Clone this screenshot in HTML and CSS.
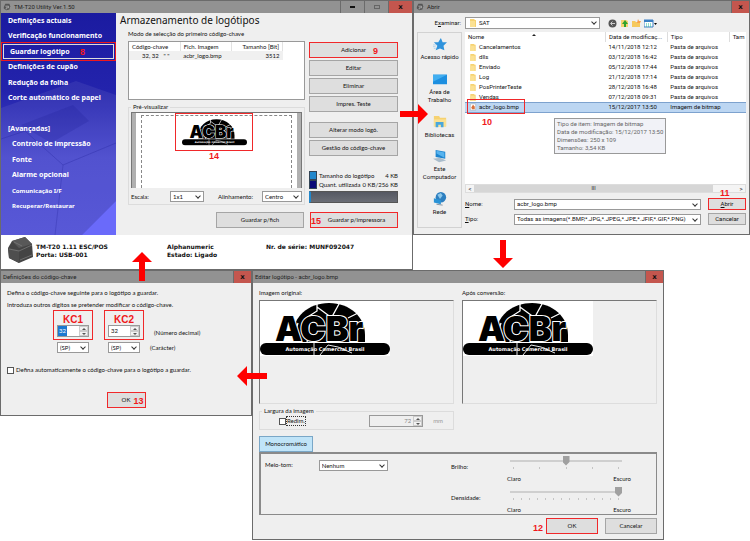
FILE: index.html
```html
<!DOCTYPE html>
<html lang="pt">
<head>
    <meta charset="UTF-8">
    <meta name="viewport" content="width=device-width, initial-scale=1.0">
    <title>TM-T20 Utility - Armazenamento de logótipos</title>
    <link rel="stylesheet" href="styles.css">
</head>
<body>
    <svg class="defs" width="0" height="0" aria-hidden="true">
        <symbol id="ball" viewBox="0 0 130 55">
            <path d="M33 34 C33 16 48 2 69 2 C90 2 105 16 105 34 L105 42 L33 42 Z"/>
            <path d="M57 1 L57 10 L46 17 M57 6 L72 17 M79 3 L73 14 L73 20 M88 17 L98 12 M38 22 L34 34 M50 18 L47 42 M92 20 L96 42" fill="none" stroke="#fff" stroke-width="1.3"/>
            <rect x="0" y="41" width="130" height="2" fill="#fff"/>
            <rect x="0" y="42" width="130" height="12" rx="6"/>
            <path d="M54 42 L54 54 M60 54 L68 44 L78 46 L92 52" fill="none" stroke="#fff" stroke-width="0.9"/>
        </symbol>
        <symbol id="folder" viewBox="0 0 8 9">
            <path d="M1 1h4l1 1h1v7H1z" fill="#f6d271"/>
            <path d="M1 3h5v6H1z" fill="#fbe193"/>
        </symbol>
        <symbol id="appicon" viewBox="0 0 10 10">
            <path d="M1 5 L3 1 L8 1 L9 4 L8 8 L4 9 L1 7z" fill="#555"/>
            <path d="M3 4h4v2H4v2" fill="none" stroke="#bbb"/>
        </symbol>
    </svg>

    <div class="board">
        <div class="row top">
            <!-- main window -->
            <section class="window utility">
                <header class="titlebar">
                    <svg class="app"><use href="#appicon"/></svg>
                    <span>TM-T20 Utility Ver.1.50</span>
                    <div class="winbtns">
                        <button aria-label="Minimizar"><i class="min"></i></button>
                        <button aria-label="Maximizar"><i class="max"></i></button>
                        <button class="close" aria-label="Fechar">x</button>
                    </div>
                </header>
                <div class="utility-body">
                    <nav class="menu">
                        <svg class="menu-bg" viewBox="0 0 115 222" preserveAspectRatio="none" aria-hidden="true">
                            <path d="M0 95 L75 68 L115 82 L115 188 L81 222 L0 222z" fill="#fff" opacity=".07"/>
                            <path d="M0 126 L24 118 L62 152 L115 130" fill="none" stroke="#2828a0" opacity=".35"/>
                            <path d="M20 112 L72 92 L88 108 L50 130z" fill="#1a1a90" opacity=".2"/>
                            <path d="M62 152 L54 222" stroke="#2828a0" opacity=".3"/>
                            <path d="M115 188 L81 222 L115 222z" fill="#6a6afa"/>
                        </svg>
                        <ul>
                            <li><a href="#">Definições actuais</a></li>
                            <li><a href="#">Verificação funcionamento</a></li>
                            <li class="active"><a href="#">Guardar logótipo</a><b class="num n8">8</b></li>
                            <li><a href="#">Definições de cupão</a></li>
                            <li><a href="#">Redução da folha</a></li>
                            <li><a href="#">Corte automático de papel</a></li>
                            <li></li>
                            <li>[Avançadas]</li>
                            <li class="sub"><a href="#">Controlo de impressão</a></li>
                            <li class="sub"><a href="#">Fonte</a></li>
                            <li class="sub"><a href="#">Alarme opcional</a></li>
                            <li class="sub small"><a href="#">Comunicação I/F</a></li>
                            <li class="sub small"><a href="#">Recuperar/Restaurar</a></li>
                        </ul>
                    </nav>
                    <main class="storage">
                        <h1>Armazenamento de logótipos</h1>
                        <div class="storage-grid">
                            <div class="left">
                                <p>Modo de selecção do primeiro código-chave</p>
                                <div class="keylist">
                                    <table>
                                        <thead>
                                            <tr><th>Código-chave</th><th>Fich. Imagem</th><th class="right">Tamanho [Bit]</th></tr>
                                        </thead>
                                        <tbody>
                                            <tr><td class="indent">32, 32 &nbsp; " "</td><td>acbr_logo.bmp</td><td class="right">3512</td></tr>
                                        </tbody>
                                    </table>
                                </div>
                                <fieldset class="preview-group">
                                    <legend>Pré-visualizar</legend>
                                    <div class="preview">
                                        <div class="paper">
                                            <div class="marked logo-mark">
                                                <svg class="logo" viewBox="0 0 130 55">
                                                    <use href="#ball"/>
                                                    <text class="acbr-name" x="15" y="40">ACBr</text>
                                                    <text class="acbr-sub" x="65" y="50">Automação Comercial Brasil</text>
                                                </svg>
                                                <b class="num n14">14</b>
                                            </div>
                                        </div>
                                    </div>
                                    <div class="options">
                                        <label for="scale">Escala:</label>
                                        <span class="select scale"><select id="scale"><option>1x1</option></select></span>
                                        <label for="align">Alinhamento:</label>
                                        <span class="select align"><select id="align"><option>Centro</option></select></span>
                                    </div>
                                </fieldset>
                            </div>
                            <div class="actions">
                                <button class="btn marked">Adicionar<b class="num n9">9</b></button>
                                <button class="btn">Editar</button>
                                <button class="btn">Eliminar</button>
                                <button class="btn">Impres. Teste</button>
                                <button class="btn spaced">Alterar modo logó.</button>
                                <button class="btn">Gestão do código-chave</button>
                                <dl class="memory">
                                    <div><dt>Tamanho do logótipo</dt><dd>4 KB</dd></div>
                                    <div class="used"><dt>Quant. utilizada</dt><dd>0 KB/256 KB</dd></div>
                                </dl>
                                <div class="membar"></div>
                            </div>
                        </div>
                        <div class="save">
                            <button class="btn">Guardar p/fich</button>
                            <button class="btn marked">Guardar p/impressora<b class="num n15">15</b></button>
                        </div>
                    </main>
                </div>
                <footer class="status">
                    <svg class="printer" viewBox="0 0 25 27">
                        <path d="M0 11 L4 4 L17 0 L24 7 L25 20 L11 26 L1 21z" fill="#444"/>
                        <path d="M4 4 L17 0 L24 7 L11 11z" fill="#585858"/>
                        <path d="M0 11 L11 13 L11 26 L1 21z" fill="#4e4e4e"/>
                        <path d="M6 5 L14 9 M1 12 L11 14 L24 8 M12 23 L24 18" fill="none" stroke="#777" stroke-width=".8"/>
                    </svg>
                    <p class="model">TM-T20 1.11 ESC/POS<br>Porta: USB-001</p>
                    <p class="state">Alphanumeric<br>Estado: Ligado</p>
                    <p>Nr. de série: MUNF092047</p>
                </footer>
            </section>

            <!-- open file dialog -->
            <section class="window open">
                <header class="titlebar">
                    <svg class="app"><use href="#appicon"/></svg>
                    <span>Abrir</span>
                    <div class="winbtns"><button class="close" aria-label="Fechar">x</button></div>
                </header>
                <div class="lookin">
                    <label for="dir">E<u>x</u>aminar:</label>
                    <span class="select dir"><svg><use href="#folder"/></svg><select id="dir"><option>SAT</option></select></span>
                    <div class="tools">
                        <button aria-label="Voltar"><svg viewBox="0 0 9 9"><circle cx="4.500" cy="4.500" r="4" fill="#555"/><path d="M7 4.500H3M4.500 2.500l-2 2 2 2" fill="none" stroke="#ccc"/></svg></button>
                        <button aria-label="Subir"><svg viewBox="0 0 9 9"><path d="M1 1h5l2 1v6H1z" fill="#f6d271"/><path d="M4 8V5H2l3-4 3 4H6v3z" fill="#2ea32e"/></svg></button>
                        <button aria-label="Nova pasta"><svg viewBox="0 0 9 9"><path d="M0 2h3l1 1h4v5H0z" fill="#f6c95c"/><path d="M6 0l1 2 2 0-1 2H5z" fill="#f7a04b"/></svg></button>
                        <button class="views" aria-label="Ver"><svg viewBox="0 0 13 9"><path d="M0 1h9v7H0z" fill="#fff" stroke="#3a7fc4"/><path d="M0 1h9v2H0z" fill="#3a7fc4"/><path d="M2 5h1M4 5h1M6 5h1M2 7h1M4 7h1M6 7h1" stroke="#2b9"/><path d="M10 4h3l-1.500 2z"/></svg></button>
                    </div>
                </div>
                <div class="browser">
                    <nav class="places">
                        <a href="#"><svg viewBox="0 0 16 16"><path d="M9 1l2 5 5 0-4 4 1 5-5-2-5 2 2-5-4-4h5z" fill="#2f93dc"/><path d="M0 9h4M0 11h3M1 13h2" stroke="#8fc6ef" stroke-width=".7"/></svg>Acesso rápido</a>
                        <a href="#"><svg viewBox="0 0 16 16"><path d="M0 3h16v11H0z" fill="#1d8fe0"/><path d="M0 3h16L0 11z" fill="#41aef0"/></svg>Área de<br>Trabalho</a>
                        <a href="#"><svg viewBox="0 0 16 16"><path d="M1 1h6l1 2h7v10H1z" fill="#f6d271"/><path d="M1 5h14v8H1z" fill="#fbe193"/><path d="M3 14V8h9v6H9v-3H6v3z" fill="#4aa7dc"/></svg>Bibliotecas</a>
                        <a href="#"><svg viewBox="0 0 16 16"><path d="M3 1l11 2v8L3 9z" fill="#1d85cf"/><path d="M4 2l9 2v6L4 5z" fill="#57b3ee"/><path d="M0 11l8-1 7 3-8 2z" fill="#a9bccb"/></svg>Este<br>Computador</a>
                        <a href="#"><svg viewBox="0 0 16 16"><circle cx="9" cy="6" r="6" fill="#2d7fc0"/><path d="M5 3l4-2 2 3-3 4z" fill="#8cc7ea"/><path d="M1 7l8 2v5l-8-2z" fill="#2a93d6"/><path d="M4 14l7 1" stroke="#789"/></svg>Rede</a>
                    </nav>
                    <div class="files">
                        <div class="filelist">
                            <table>
                                <thead>
                                    <tr><th>Nome<i class="sort"></i></th><th>Data de modificaç...</th><th>Tipo</th><th>Tam</th></tr>
                                </thead>
                                <tbody>
                                    <tr><td><svg><use href="#folder"/></svg>Cancelamentos</td><td>14/11/2018 12:12</td><td>Pasta de arquivos</td><td></td></tr>
                                    <tr><td><svg><use href="#folder"/></svg>dlls</td><td>03/12/2018 16:42</td><td>Pasta de arquivos</td><td></td></tr>
                                    <tr><td><svg><use href="#folder"/></svg>Enviado</td><td>05/12/2018 17:44</td><td>Pasta de arquivos</td><td></td></tr>
                                    <tr><td><svg><use href="#folder"/></svg>Log</td><td>21/12/2018 17:14</td><td>Pasta de arquivos</td><td></td></tr>
                                    <tr><td><svg><use href="#folder"/></svg>PosPrinterTeste</td><td>28/12/2018 16:48</td><td>Pasta de arquivos</td><td></td></tr>
                                    <tr><td><svg><use href="#folder"/></svg>Vendas</td><td>07/12/2018 09:31</td><td>Pasta de arquivos</td><td></td></tr>
                                    <tr class="selected"><td><svg viewBox="0 0 8 9"><path d="M1 1h6v7H1z" fill="#fff" stroke="#999" stroke-width=".5"/><path d="M2 5l2-3 2 2v3H3z" fill="#d9703a"/></svg>acbr_logo.bmp</td><td>15/12/2017 13:50</td><td>Imagem de bitmap</td><td></td></tr>
                                </tbody>
                            </table>
                            <div class="file-mark"><b class="num n10">10</b></div>
                            <div class="tooltip" role="tooltip">Tipo de item: Imagem de bitmap<br>Data de modificação: 15/12/2017 13:50<br>Dimensões: 250 x 109<br>Tamanho: 3,54 KB</div>
                            <div class="scroll">
                                <button aria-label="Esquerda">&lt;</button>
                                <div class="thumb">III</div>
                                <button aria-label="Direita">&gt;</button>
                            </div>
                        </div>
                        <div class="field">
                            <label for="fname"><u>N</u>ome:</label>
                            <span class="select"><select id="fname"><option>acbr_logo.bmp</option></select></span>
                            <button class="btn marked"><span><u>A</u>brir</span><b class="num n11">11</b></button>
                        </div>
                        <div class="field">
                            <label for="ftype"><u>T</u>ipo:</label>
                            <span class="select"><select id="ftype"><option>Todas as imagens(*.BMP,*.JPG,*.JPEG,*.JPE,*.JFIF,*.GIF,*.PNG)</option></select></span>
                            <button class="btn">Cancelar</button>
                        </div>
                    </div>
                </div>
            </section>
        </div>

        <div class="row bottom">
            <!-- key code dialog -->
            <section class="window keycode">
                <header class="titlebar">
                    <span>Definições do código-chave</span>
                    <div class="winbtns"><button class="close" aria-label="Fechar">x</button></div>
                </header>
                <div class="keycode-body">
                    <p>Defina o código-chave seguinte para o logótipo a guardar.</p>
                    <p>Introduza outros dígitos se pretender modificar o código-chave.</p>
                    <div class="codes">
                        <div class="code marked">
                            <label class="num" for="kc1">KC1</label>
                            <span class="spin chosen"><input id="kc1" type="number" value="32"><span class="steps"><button aria-label="Mais"></button><button aria-label="Menos"></button></span></span>
                        </div>
                        <div class="code marked">
                            <label class="num" for="kc2">KC2</label>
                            <span class="spin"><input id="kc2" type="number" value="32"><span class="steps"><button aria-label="Mais"></button><button aria-label="Menos"></button></span></span>
                        </div>
                        <span class="hint">(Número decimal)</span>
                    </div>
                    <div class="codes chars">
                        <span class="select"><select aria-label="Carácter 1"><option>(SP)</option></select></span>
                        <span class="select"><select aria-label="Carácter 2"><option>(SP)</option></select></span>
                        <span class="hint">(Carácter)</span>
                    </div>
                    <label class="check"><input type="checkbox">Defina automaticamente o código-chave para o logótipo a guardar.</label>
                    <button class="btn marked ok">OK<b class="num n13">13</b></button>
                </div>
            </section>

            <!-- edit logo dialog -->
            <section class="window editor">
                <header class="titlebar">
                    <span>Editar logótipo - acbr_logo.bmp</span>
                    <div class="winbtns"><button class="close" aria-label="Fechar">x</button></div>
                </header>
                <div class="editor-body">
                    <div class="images">
                        <figure>
                            <figcaption>Imagem original:</figcaption>
                            <div class="canvas">
                                <svg class="logo" viewBox="0 0 130 55">
                                    <use href="#ball"/>
                                    <text class="acbr-name" x="15" y="40">ACBr</text>
                                    <text class="acbr-sub" x="65" y="50">Automação Comercial Brasil</text>
                                </svg>
                            </div>
                        </figure>
                        <figure>
                            <figcaption>Após conversão:</figcaption>
                            <div class="canvas">
                                <svg class="logo" viewBox="0 0 130 55">
                                    <use href="#ball"/>
                                    <text class="acbr-name" x="15" y="40">ACBr</text>
                                    <text class="acbr-sub" x="65" y="50">Automação Comercial Brasil</text>
                                </svg>
                            </div>
                        </figure>
                        <fieldset class="width-group">
                            <legend>Largura da imagem</legend>
                            <label class="check"><input type="checkbox"><span>Redim.</span></label>
                            <span class="spin off"><input type="number" value="72" disabled aria-label="Largura"><span class="steps"><button aria-label="Mais" disabled></button><button aria-label="Menos" disabled></button></span></span>
                            <span class="unit">mm</span>
                        </fieldset>
                    </div>
                    <button class="tab">Monocromático</button>
                    <div class="tone">
                        <label for="half">Meio-tom:</label>
                        <span class="select half"><select id="half"><option>Nenhum</option></select></span>
                        <div class="sliders">
                            <label for="bright">Brilho:</label>
                            <div class="slider">
                                <input id="bright" type="range" min="0" max="4" value="2">
                                <div class="ticks"><i></i><i></i><i></i><i></i><i></i></div>
                                <div class="ends"><span>Claro</span><span>Escuro</span></div>
                            </div>
                            <label for="density">Densidade:</label>
                            <div class="slider">
                                <input id="density" type="range" min="0" max="13" value="13">
                                <div class="ticks"><i></i><i></i><i></i><i></i><i></i><i></i><i></i><i></i><i></i><i></i><i></i><i></i><i></i><i></i></div>
                                <div class="ends"><span>Claro</span><span>Escuro</span></div>
                            </div>
                        </div>
                    </div>
                    <div class="confirm">
                        <button class="btn marked">OK<b class="num n12">12</b></button>
                        <button class="btn">Cancelar</button>
                    </div>
                </div>
            </section>
        </div>

        <!-- arrows between the windows -->
        <svg class="arrow to-open" viewBox="0 0 28 20"><path d="M0 7h18V0l10 10-10 10v-7H0z"/></svg>
        <svg class="arrow to-editor" viewBox="0 0 20 28"><path d="M7 0v18H0l10 10 10-10h-7V0z"/></svg>
        <svg class="arrow to-keycode" viewBox="0 0 30 20"><path d="M30 7H10V0L0 10l10 10v-7h20z"/></svg>
        <svg class="arrow to-utility" viewBox="0 0 20 29"><path d="M7 29V10H0L10 0l10 10h-7v19z"/></svg>
    </div>
</body>
</html>
```

FILE: styles.css
```css
* {
    box-sizing: border-box;
}

body {
    margin: 0;
    background: #fff;
    color: #111;
    font: 6px/8px Lato, "Liberation Sans", sans-serif;
}

p, h1, ul, dl, dd, figure {
    margin: 0;
    padding: 0;
}

ul {
    list-style: none;
}

a {
    color: inherit;
    text-decoration: none;
}

button, input, select {
    margin: 0;
    padding: 0;
    border: 0;
    border-radius: 0;
    background: none;
    color: inherit;
    font: inherit;
}

table {
    width: 100%;
    border-collapse: collapse;
    table-layout: fixed;
}

th, td {
    padding: 0 3px;
    text-align: left;
    font-weight: normal;
    white-space: nowrap;
    overflow: hidden;
}

.defs {
    position: absolute;
}

.board {
    position: relative;
}

.row {
    display: grid;
    align-items: start;
}

.top {
    grid-template-columns: 413fr 337fr;
}

.bottom {
    grid-template-columns: 252fr 412fr 86fr;
}

/* windows */
.window {
    background: #efefef;
    border: 1px solid #6b6b6b;
    min-width: 0;
}

.open {
    font-family: Roboto, "Liberation Sans", sans-serif;
}

.titlebar {
    display: flex;
    align-items: center;
    height: 12px;
    padding-left: 2px;
    background: #929292;
    color: #222;
    font-family: Roboto, "Liberation Sans", sans-serif;
}

.app {
    width: 8px;
    height: 8px;
    margin-right: 3px;
}

.winbtns {
    display: flex;
    align-self: stretch;
    margin-left: auto;
}

.winbtns button {
    display: flex;
    align-items: center;
    justify-content: center;
    width: 24px;
    border-left: 1px solid #6b6b6b;
}

.winbtns .close {
    background: #c4564e;
    font: bold 7px/8px "DejaVu Sans", sans-serif;
    color: #111;
}

.open .close, .keycode .close, .editor .close {
    width: 18px;
}

.min {
    width: 5px;
    height: 2px;
    background: #111;
}

.max {
    width: 6px;
    height: 4px;
    border: 1px solid #666;
}

/* controls */
.btn {
    position: relative;
    height: 16px;
    border: 1px solid #a5a5a5;
    background: #dedede;
    text-align: center;
}

.marked {
    position: relative;
    border: 1px solid #f0282a;
}

.num {
    color: #f0181c;
    font: bold 9px/10px "Liberation Sans", sans-serif;
}

b.num {
    position: absolute;
}

.select {
    position: relative;
    display: flex;
    height: 11px;
    border: 1px solid #999;
    background: #fff;
}

.select select {
    flex: 1;
    min-width: 0;
    padding: 0 10px 0 2px;
    appearance: none;
}

.select::after {
    content: "";
    position: absolute;
    right: 3px;
    top: 2px;
    width: 3px;
    height: 3px;
    border: solid #333;
    border-width: 0 1px 1px 0;
    transform: rotate(45deg);
    pointer-events: none;
}

.spin {
    display: flex;
    height: 12px;
    border: 1px solid #999;
    background: #fff;
}

.spin input {
    flex: 1;
    min-width: 0;
    padding-left: 2px;
    appearance: textfield;
}

.spin input::-webkit-inner-spin-button {
    display: none;
}

.spin.chosen input {
    width: 9px;
    flex: none;
    padding: 0 0 0 1px;
    background: #1c78d0;
    color: #fff;
}

.steps {
    display: flex;
    flex-direction: column;
    width: 9px;
    margin-left: auto;
}

.steps button {
    flex: 1;
    display: flex;
    align-items: center;
    justify-content: center;
    border: 1px solid #ccc;
    background: #f2f2f2;
}

.steps button::after {
    content: "";
    border: solid transparent;
    border-width: 0 2px 2px;
    border-bottom-color: #555;
}

.steps button:last-child::after {
    border-width: 2px 2px 0;
    border-top-color: #555;
}

.check {
    display: flex;
    align-items: center;
    gap: 2px;
}

.check input {
    width: 7px;
    height: 7px;
    appearance: none;
    border: 1px solid #555;
    background: #fff;
}

fieldset {
    min-width: 0;
    margin: 0;
    border: 1px solid #dcdcdc;
}

legend {
    padding: 0 2px;
}

/* main window */
.utility-body {
    display: grid;
    grid-template-columns: 115px 1fr;
}

.menu {
    position: relative;
    padding-bottom: 21px;
    background: linear-gradient(#1b1ba0, #2323ac 35%, #4545cc 65%, #4c4cd4);
    color: #fff;
    font: bold 7px/10px "Noto Sans", sans-serif;
}

.menu-bg {
    position: absolute;
    width: 100%;
    height: 100%;
}

.menu ul {
    position: relative;
    height: 100%;
    display: grid;
    grid-template-rows: repeat(13, 1fr);
}

.menu li {
    display: flex;
    align-items: center;
    padding-left: 7px;
}

.menu .sub {
    padding-left: 11px;
}

.menu .small {
    font-size: 6px;
}

.menu .active {
    position: relative;
    margin: 0 2px;
    border: 1px solid #ddd;
    outline: 1px solid #f0181c;
    outline-offset: 1px;
    padding-left: 6px;
}

.n8 {
    left: 76px;
}

.storage {
    padding: 0 14px 7px 4px;
}

.storage h1 {
    font: 10px/14px "Noto Sans", sans-serif;
}

.storage-grid {
    display: grid;
    grid-template-columns: 177fr 89fr;
    gap: 4px;
    padding: 3px 0 0 8px;
}

.keylist {
    height: 59px;
    margin: 3px 0;
    border: 1px solid #999;
    background: #fff;
}

.keylist table {
    width: 88%;
}

.keylist th, .keylist td {
    height: 9px;
    border-right: 1px solid #e2e2e2;
}

.keylist td {
    border: 0;
    background: #f0f0f0;
}

.keylist .indent {
    padding-left: 13px;
}

.keylist .right {
    text-align: right;
}

.preview-group {
    padding: 1px 2px 2px;
}

.preview {
    height: 76px;
    padding: 0 4px;
    border: 1px solid #777;
    border-bottom: 0;
    background: #b0b0b0;
}

.paper {
    position: relative;
    height: 100%;
    padding: 0 5px;
    background: #fff;
}

.paper::before {
    content: "";
    position: absolute;
    inset: 2px 5px 0;
    border: 1px dashed #888;
    border-bottom: 0;
}

.logo-mark {
    width: 78px;
    height: 38px;
    margin: 0 0 0 34px;
    padding: 4px 6px;
}

.logo-mark .logo {
    display: block;
    width: 65px;
    height: 28px;
}

.n14 {
    left: 33px;
    top: 37px;
}

.options {
    display: flex;
    align-items: center;
    margin-top: 3px;
}

.scale {
    width: 34px;
    margin: 0 14px 0 auto;
}

.align {
    width: 40px;
    margin-left: 9px;
}

.actions {
    display: flex;
    flex-direction: column;
    gap: 2px;
    padding-top: 12px;
}

.actions .spaced {
    margin-top: 8px;
}

.n9 {
    left: 63px;
    top: 3px;
}

.memory {
    margin-top: auto;
}

.memory div {
    display: flex;
    height: 9px;
    align-items: center;
}

.memory div::before {
    content: "";
    width: 6px;
    height: 7px;
    margin-right: 2px;
    border: 1px solid #345;
    background: #2288cc;
}

.memory .used::before {
    background: #0a0a78;
}

.memory dd {
    margin-left: auto;
}

.membar {
    height: 12px;
    margin-bottom: 2px;
    border: 1px solid #555;
    border-left: 2px solid #2288cc;
    background: linear-gradient(#555862, #6a6d75);
}

.save {
    display: flex;
    justify-content: flex-end;
    gap: 6px;
    margin-top: 7px;
}

.save .btn {
    width: 88px;
}

.save .marked {
    padding-left: 5px;
}

.n15 {
    left: 0;
    top: 3px;
}

.status {
    display: flex;
    height: 34px;
    padding: 2px 7px;
    background: #fff;
    font: bold 6px/8px "DejaVu Sans", sans-serif;
}

.status p {
    padding-top: 6px;
}

.printer {
    width: 25px;
    height: 27px;
    margin-right: 3px;
}

.model {
    width: 131px;
}

.state {
    width: 99px;
}

/* open dialog */
.lookin {
    display: flex;
    align-items: center;
    padding: 4px 3px 3px;
}

.lookin label {
    width: 44px;
    text-align: right;
}

.dir {
    width: 135px;
    height: 12px;
    margin: 0 8px 0 4px;
    padding-left: 3px;
}

.dir svg {
    width: 8px;
    height: 9px;
}

.tools {
    display: flex;
    gap: 3px;
}

.tools svg {
    display: block;
    width: 9px;
    height: 9px;
}

.tools .views svg {
    width: 13px;
}

.browser {
    display: grid;
    grid-template-columns: 45px 1fr;
    gap: 3px;
    padding: 0 3px 6px;
}

.places {
    display: flex;
    flex-direction: column;
    justify-content: space-between;
    padding: 4px 0 11px;
    border: 1px solid #d2d2d2;
    text-align: center;
}

.places svg {
    display: block;
    width: 14px;
    height: 14px;
    margin: 0 auto 2px;
}

.filelist {
    position: relative;
    display: flex;
    flex-direction: column;
    height: 161px;
    margin-bottom: 5px;
    background: #fff;
}

.filelist th, .filelist td {
    height: 10px;
}

.filelist th {
    border-right: 1px solid #ddd;
}

.filelist th:first-child {
    width: 50%;
}

.filelist th:nth-child(n+2) {
    width: 22%;
}

.filelist th:last-child {
    width: 6%;
    border: 0;
}

.sort {
    float: right;
    margin: 1px 66px 0 0;
    border: solid transparent;
    border-width: 0 2px 2px;
    border-bottom-color: #222;
}

.filelist td:first-child {
    padding-left: 4px;
}

.filelist td svg {
    width: 8px;
    height: 8px;
    margin-right: 2px;
    vertical-align: top;
}

.selected td {
    background: #bcd6f2;
    border-top: 1px solid #7da2ce;
    border-bottom: 1px solid #7da2ce;
}

.file-mark {
    position: absolute;
    left: 2px;
    top: 67px;
    width: 58px;
    height: 15px;
    border: 1px solid #f0282a;
}

.n10 {
    left: 14px;
    top: 17px;
}

.tooltip {
    position: absolute;
    left: 89px;
    top: 86px;
    padding: 1px 2px;
    border: 1px solid #999;
    background: #f1f2f7;
    color: #666;
}

.scroll {
    display: flex;
    height: 9px;
    margin-top: auto;
    background: #f4f4f4;
    border: 1px solid #ddd;
    line-height: 7px;
}

.scroll button {
    width: 8px;
    font-size: 6px;
}

.thumb {
    flex: 1;
    margin-right: 24px;
    background: #d6d6d6;
    text-align: center;
    font-size: 5px;
}

.field {
    display: grid;
    grid-template-columns: 45px 1fr 38px;
    align-items: center;
    gap: 4px;
    margin-bottom: 3px;
}

.field .select {
    margin-right: 3px;
}

.field .btn {
    height: 12px;
    line-height: 8px;
}

.n11 {
    left: 11px;
    top: -11px;
}

/* key code dialog */
.keycode-body {
    display: flex;
    flex-direction: column;
    padding: 6px 6px 7px;
}

.keycode-body p {
    margin-bottom: 4px;
}

.codes {
    display: flex;
    align-items: flex-end;
    gap: 11px;
    margin: -3px 0 0 46px;
}

.code {
    display: flex;
    flex-direction: column;
    width: 40px;
    padding: 4px 3px 2px;
    text-align: center;
}

.code .num {
    font-size: 10px;
}

.hint {
    margin-left: -1px;
    padding-bottom: 3px;
}

.chars {
    align-items: center;
    gap: 19px;
    margin: 2px 0 0 50px;
}

.chars .select {
    width: 32px;
}

.chars .hint {
    margin-left: -9px;
    padding: 0;
}

.keycode .check {
    margin-top: 13px;
}

.ok {
    align-self: center;
    width: 39px;
    margin-top: 18px;
}

.n13 {
    left: 26px;
    top: 3px;
}

/* editor dialog */
.editor-body {
    padding: 6px 6px 5px;
}

.images {
    display: grid;
    grid-template-columns: 1fr 1fr;
    gap: 3px 8px;
}

figcaption {
    margin-bottom: 3px;
}

.canvas {
    height: 104px;
    border: 1px solid #888;
    border-color: #777 #ddd #ddd #777;
}

.canvas .logo {
    display: block;
    width: 130px;
    height: 55px;
    background: #fff;
}

.acbr-name {
    font: 900 34px Inter, "DejaVu Sans", sans-serif;
    fill: #000;
    stroke: #fff;
    stroke-width: 2px;
    paint-order: stroke;
}

.acbr-sub {
    font: bold 5px "DejaVu Sans", sans-serif;
    fill: #fff;
    text-anchor: middle;
}

.width-group {
    display: flex;
    align-items: center;
    padding: 0 4px 2px 2px;
}

.width-group .check {
    gap: 0;
    margin-left: 17px;
}

.width-group .check span {
    border: 1px dotted #333;
}

.width-group .spin {
    width: 54px;
    margin-left: auto;
    background: #efefef;
    color: #888;
}

.width-group input[type="number"] {
    padding-right: 2px;
    text-align: right;
}

.unit {
    margin: 0 6px 0 10px;
    color: #999;
}

.tab {
    display: block;
    width: 54px;
    height: 16px;
    margin-top: 6px;
    border: 1px solid #7aa7c7;
    background: #c0e4f8;
}

.tone {
    display: flex;
    align-items: flex-start;
    height: 63px;
    padding: 6px 25px 0 4px;
    border: 1px solid #8a8a8a;
    border-width: 2px 1px 1px 2px;
}

.tone label {
    padding-top: 1px;
}

.half {
    width: 69px;
    margin-left: 26px;
}

.sliders {
    display: grid;
    grid-template-columns: 56px 124px;
    row-gap: 3px;
    margin: -5px 0 0 auto;
}

.sliders label {
    padding-top: 8px;
}

.slider input {
    display: block;
    width: 112px;
    height: 11px;
    margin-left: 3px;
    appearance: none;
}

.slider input::-webkit-slider-runnable-track {
    height: 2px;
    background: #cfcfcf;
}

.slider input::-webkit-slider-thumb {
    appearance: none;
    width: 7px;
    height: 10px;
    margin-top: -4px;
    background: #a0a0a0;
    clip-path: polygon(0 0, 100% 0, 100% 65%, 50% 100%, 0 65%);
}

.ticks {
    display: flex;
    justify-content: space-between;
    margin: 1px 12px 0 6px;
}

.ticks i {
    width: 1px;
    height: 2px;
    background: #c4c4c4;
}

.ends {
    display: flex;
    justify-content: space-between;
    margin-top: 6px;
}

.confirm {
    display: flex;
    justify-content: flex-end;
    gap: 7px;
    margin-top: 3px;
}

.confirm .btn {
    width: 52px;
}

.n12 {
    left: -14px;
    top: 4px;
}

/* arrows */
.arrow {
    position: absolute;
    fill: #f00;
}

.to-open {
    left: 53.3%;
    top: 104px;
    width: 28px;
    height: 20px;
}

.to-editor {
    left: 65.7%;
    top: 240px;
    width: 20px;
    height: 28px;
}

.to-keycode {
    left: 31.6%;
    top: 366px;
    width: 30px;
    height: 20px;
}

.to-utility {
    left: 17.6%;
    top: 252px;
    width: 20px;
    height: 29px;
}
```
